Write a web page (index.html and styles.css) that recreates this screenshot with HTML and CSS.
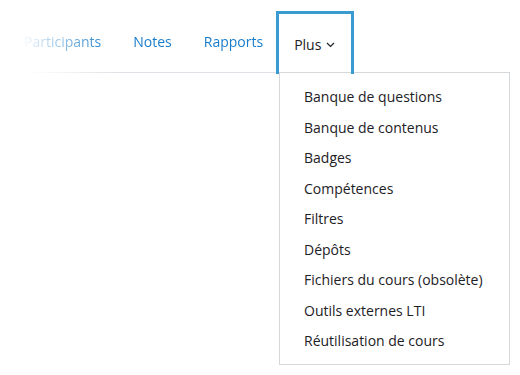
FILE: index.html
```html
<!DOCTYPE html>
<html lang="fr">
<head>
    <meta charset="UTF-8">
    <meta name="viewport" content="width=device-width, initial-scale=1.0">
    <title>Navigation secondaire</title>
    <link rel="stylesheet" href="styles.css">
</head>
<body>

    <!-- Secondary navigation -->
    <nav class="secondary-nav">
        <ul class="nav-tabs">
            <li><a href="#" class="nav-link">Participants</a></li>
            <li><a href="#" class="nav-link">Notes</a></li>
            <li><a href="#" class="nav-link">Rapports</a></li>
        </ul>

        <div class="more-menu">
            <a href="#" class="more-toggle">Plus
                <svg class="chevron" width="9" height="6" viewBox="0 0 9 6">
                    <path d="M1 1 L4.5 4.5 L8 1" fill="none" stroke="#1d2125" stroke-width="1.2"/>
                </svg>
            </a>
        </div>
    </nav>

    <!-- Dropdown of the "Plus" tab -->
    <ul class="dropdown">
        <li><a href="#" class="dropdown-item">Banque de questions</a></li>
        <li><a href="#" class="dropdown-item">Banque de contenus</a></li>
        <li><a href="#" class="dropdown-item">Badges</a></li>
        <li><a href="#" class="dropdown-item">Compétences</a></li>
        <li><a href="#" class="dropdown-item">Filtres</a></li>
        <li><a href="#" class="dropdown-item">Dépôts</a></li>
        <li><a href="#" class="dropdown-item">Fichiers du cours (obsolète)</a></li>
        <li><a href="#" class="dropdown-item">Outils externes LTI</a></li>
        <li><a href="#" class="dropdown-item">Réutilisation de cours</a></li>
    </ul>

</body>
</html>
```

FILE: styles.css
```css
body {
    margin: 0;
    font-family: "Open Sans", sans-serif;
    font-size: 14px;
    color: #1d2125;
    background: #fff;
}

a {
    text-decoration: none;
}

.secondary-nav {
    display: flex;
    align-items: flex-end;
    height: 72px;
    width: 510px;
    border-bottom: 1px solid #dee2e6;
    border-image: linear-gradient(to right, rgba(222, 226, 230, 0) 30px, #dee2e6 120px) 1;
}

.nav-tabs {
    display: flex;
    list-style: none;
    margin: 0;
    padding: 0 0 0 8px;
    -webkit-mask-image: linear-gradient(to right, transparent 20px, #000 110px);
    mask-image: linear-gradient(to right, transparent 20px, #000 110px);
}

.nav-link {
    display: block;
    padding: 0 16px;
    line-height: 61px;
    color: #1a7dcc;
}

.more-menu {
    margin-left: -3px;
}

.more-toggle {
    display: flex;
    align-items: center;
    gap: 5px;
    height: 60px;
    padding: 0 16px 0 15px;
    margin-bottom: -2px;
    border: 3px solid #399bd0;
    border-bottom: none;
    color: #1d2125;
}

.chevron {
    margin-top: 2px;
}

.dropdown {
    list-style: none;
    width: 229px;
    margin: -1px 0 0 279px;
    padding: 9px 0 7px;
    background: #fff;
    border: 1px solid #d5d8db;
}

.dropdown-item {
    display: block;
    padding: 4px 24px;
    line-height: 22.5px;
    color: #1d2125;
}
```
